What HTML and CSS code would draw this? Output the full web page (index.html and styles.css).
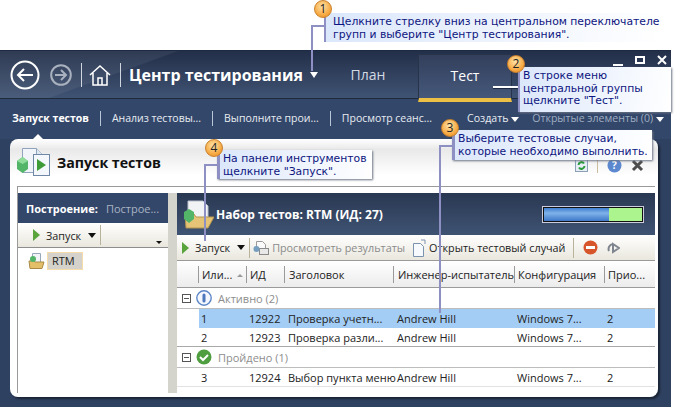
FILE: index.html
```html
<!DOCTYPE html>
<html lang="ru">
<head>
<meta charset="utf-8">
<title>Центр тестирования</title>
<link rel="stylesheet" href="styles.css">
</head>
<body>
<div class="stage">
  <main class="app">
    <header class="topbar">
      <svg class="glyph back" width="30" height="30" viewBox="0 0 30 30"><circle cx="15" cy="15" r="13.5" fill="none" stroke="#fff" stroke-width="2"/><path d="M23 15H8M14 9l-6 6 6 6" fill="none" stroke="#fff" stroke-width="2"/></svg>
      <svg class="glyph fwd" width="22" height="22" viewBox="0 0 22 22"><circle cx="11" cy="11" r="9.8" fill="none" stroke="#a9b1bf" stroke-width="2"/><path d="M5 11h11M11 6l5 5-5 5" fill="none" stroke="#a9b1bf" stroke-width="2"/></svg>
      <span class="vsep"></span>
      <svg class="glyph home" width="22" height="22" viewBox="0 0 22 22"><path d="M1 11 11 2l10 9M4 9v12h14V9M9 21v-7h4v7" fill="none" stroke="#fff" stroke-width="1.5"/></svg>
      <span class="vsep"></span>
      <h1 class="hub">Центр тестирования</h1>
      <span class="caret caret-lg"></span>
      <nav class="tabs">
        <span class="tab">План</span>
        <span class="tab tab-on">Тест</span>
      </nav>
      <div class="winbtns">
        <span class="win-min"></span><span class="win-max"></span>
        <svg width="10" height="10" viewBox="0 0 10 10"><path d="M1 1l8 8M9 1 1 9" stroke="#fff" stroke-width="2"/></svg>
      </div>
    </header>
    <nav class="menubar">
      <span class="mi mi-on">Запуск тестов</span>
      <span class="mi">Анализ тестовы...</span>
      <span class="mi">Выполните прои...</span>
      <span class="mi mi-last">Просмотр сеанс...</span>
      <span class="ma ma-create">Создать <span class="caret"></span></span>
      <span class="ma ma-open">Открытые элементы (0) <span class="caret"></span></span>
    </nav>
    <section class="panel">
      <div class="panel-head">
        <svg class="p-icon" width="34" height="30" viewBox="0 0 34 30"><path d="M5.500 .5h14l6 6v18h-20z" fill="#f1f5fa" stroke="#8fa3bd"/><path d="M19.500 .5v6h6" fill="#dfe7f1" stroke="#8fa3bd"/><rect x="16.500" y="6.500" width="16" height="21" fill="#f4f7fb" stroke="#6f88a8"/><path d="M20 11l9 6-9 6z" fill="#3f9a38"/><path d="M5.500 9l5.500 4v8l-5.500 4-5.500-4v-8z" fill="#52b568"/><path d="M5.500 9l5.500 4-5.500 3-5.500-3z" fill="#8fdc9b"/></svg>
        <h2 class="p-title">Запуск тестов</h2>
        <span class="p-tools">
          <svg width="13" height="13" viewBox="0 0 13 13"><rect x=".5" y=".5" width="12" height="12" fill="#e8eef6" stroke="#8ca0b8"/><path d="M3.500 6a3 3 0 0 1 5.500-1.500M9.500 7a3 3 0 0 1-5.500 1.500" fill="none" stroke="#2b9a3a" stroke-width="2"/></svg>
          <span class="tool-sep"></span>
          <svg width="15" height="15" viewBox="0 0 15 15"><circle cx="7.5" cy="7.5" r="7" fill="#5b88cf"/><text x="7.5" y="11" text-anchor="middle" class="help-q">?</text></svg>
          <svg width="13" height="13" viewBox="0 0 13 13"><path d="M2 2l9 9M11 2l-9 9" stroke="#4d4d4d" stroke-width="3"/></svg>
        </span>
      </div>
      <div class="frame">
        <aside class="left">
          <div class="left-head"><b>Построение:</b><span>Построе...</span></div>
          <div class="left-tools">
            <span class="play"></span><span class="tool-text">Запуск</span><span class="caret caret-dark"></span><span class="bar-sep"></span>
            <span class="caret caret-mini"></span>
          </div>
          <div class="tree">
            <svg width="17" height="16" viewBox="0 0 17 16"><path d="M4.500 .5h8v9h-8z" fill="#f2f4f8" stroke="#98a7ba"/><path d="M1 8h5l1 1h9l-2 6.500H2z" fill="#e4bf6a" stroke="#a98a44"/><circle cx="5" cy="6" r="3" fill="#52b568"/></svg>
            <span class="tree-label">RTM</span>
          </div>
        </aside>
        <div class="split"></div>
        <div class="right">
          <div class="right-head">
            <svg width="33" height="29" viewBox="0 0 33 29"><path d="M7 1h15l5 5v15H7z" fill="#f2f3f5" stroke="#b9c0ca"/><path d="M4 14h9l2 3h18l-6 11H5z" fill="#e6c477" stroke="#b39550"/><path d="M8 9l5 3v7l-5 4-5-4v-7z" fill="#52b568"/></svg>
            <h3 class="set-title">Набор тестов: RTM (ИД: 27)</h3>
            <div class="progress"><i class="p-blue"></i><i class="p-green"></i></div>
          </div>
          <div class="right-tools">
            <span class="play"></span><span class="tool-text">Запуск</span><span class="caret caret-dark"></span><span class="bar-sep sep-a"></span>
            <svg width="17" height="16" viewBox="0 0 17 16"><path d="M3.500 1.500h6l3 3v6h-9z" fill="#fafafa" stroke="#9a9a9a"/><rect x="6.500" y="8.500" width="9" height="6" fill="#e8e8e8" stroke="#8a8a8a"/><circle cx="3.500" cy="9" r="3" fill="#77a0c0"/></svg>
            <span class="tool-text muted">Просмотреть результаты</span>
            <svg class="doc" width="14" height="18" viewBox="0 0 14 18"><path d="M1.500 4.500h7l3 3v10h-10z" fill="#f7fafd" stroke="#7c93ad"/><path d="M9 1h4v4" fill="none" stroke="#7c93ad"/></svg>
            <span class="tool-text">Открыть тестовый случай</span><span class="bar-sep sep-b"></span>
            <svg width="15" height="15" viewBox="0 0 15 15"><circle cx="7.5" cy="7.5" r="7" fill="#d6552a"/><rect x="3" y="6" width="9" height="3" fill="#fff"/></svg>
            <svg class="cycle" width="13" height="14" viewBox="0 0 13 14"><path d="M6 3 12 7 6 11zM6 3A5 5 0 0 0 2 10" fill="none" stroke="#7f858e" stroke-width="2"/></svg>
          </div>
          <div class="grid">
            <div class="row thead"><span></span><span class="th">Или... <em class="sort"></em></span><span class="th">ИД</span><span class="th">Заголовок</span><span class="th">Инженер-испытатель</span><span class="th">Конфигурация</span><span class="th">Прио...</span></div>
            <div class="group">
              <span class="exp"></span>
              <svg width="16" height="16" viewBox="0 0 16 16"><circle cx="8" cy="8" r="7.2" fill="#f4f7fd" stroke="#5d86c6" stroke-width="1.4"/><rect x="6.5" y="3.5" width="3" height="9" rx="1.5" fill="#4d78bd"/></svg>
              <span class="g-text">Активно (2)</span>
            </div>
            <div class="row sel"><span class="blank"></span><span>1</span><span>12922</span><span>Проверка учетн...</span><span>Andrew Hill</span><span>Windows 7...</span><span>2</span></div>
            <div class="row line"><span></span><span>2</span><span>12923</span><span>Проверка разли...</span><span>Andrew Hill</span><span>Windows 7...</span><span>2</span></div>
            <div class="group">
              <span class="exp"></span>
              <svg width="16" height="16" viewBox="0 0 16 16"><circle cx="8" cy="8" r="7.5" fill="#4f9e3f"/><path d="M4 8l3 3 5-5" fill="none" stroke="#fff" stroke-width="2"/></svg>
              <span class="g-text">Пройдено (1)</span>
            </div>
            <div class="row line"><span></span><span>3</span><span>12924</span><span class="nowrap">Выбор пункта меню</span><span>Andrew Hill</span><span>Windows 7...</span><span>2</span></div>
          </div>
        </div>
      </div>
    </section>
  </main>

  <div class="lead lead1a"></div><div class="lead lead1b"></div>
  <div class="lead lead2"></div>
  <div class="lead lead3a"></div><div class="lead lead3b"></div>
  <div class="lead lead4a"></div><div class="lead lead4b"></div>

  <div class="note note1">Щелкните стрелку вниз на центральном переключателе<br>групп и выберите "Центр тестирования".</div>
  <div class="note note2">В строке меню<br>центральной группы<br>щелкните "Тест".</div>
  <div class="note note3">Выберите тестовые случаи,<br>которые необходимо выполнить.</div>
  <div class="note note4">На панели инструментов<br>щелкните "Запуск".</div>
  <span class="badge b1">1</span><span class="badge b2">2</span><span class="badge b3">3</span><span class="badge b4">4</span>
</div>
</body>
</html>
```

FILE: styles.css
```css
* { box-sizing: border-box; }
html, body { margin: 0; background: #fff; }
body { font-family: "Open Sans", "Noto Sans", sans-serif; font-size: 11px; color: #222; overflow: hidden; }
h1, h2, h3 { margin: 0; }
.stage { position: relative; width: 679px; height: 407px; padding-top: 50px; overflow: hidden; }

.app { width: 671px; height: 357px; background: #2f4160; display: flex; flex-direction: column; }

.topbar { height: 49px; flex: none; display: flex; align-items: center; padding-left: 10px; color: #fff; z-index: 1;
  background: linear-gradient(160deg, rgba(255,255,255,.06) 0 22%, transparent 22.5%), linear-gradient(#232f49, #3f5373); border-top: 1px solid #1c2a42; border-bottom: 1px solid #1f2a3d; position: relative; }
.glyph { flex: none; }
.fwd { margin-left: 10px; }
.vsep { width: 1px; height: 24px; background: #cfd6e0; margin: 0 8px 0 9px; flex: none; }
.home { margin-left: -1px; }
.hub { font-size: 16px; font-weight: 700; white-space: nowrap; width: 181px; }
.caret { display: inline-block; width: 0; height: 0; border-left: 4px solid transparent; border-right: 4px solid transparent; border-top: 5px solid #fff; vertical-align: middle; }
.caret-lg { margin-left: 0; border-left-width: 4.5px; border-right-width: 4.5px; border-top-width: 6px; flex: none; }
.tabs { display: flex; align-self: stretch; margin-left: 8px; }
.tab { display: flex; align-items: center; justify-content: center; font-size: 14px; color: #d4dae4; width: 84px; }
.tab-on { width: 94px; margin-left: 8px; margin-top: 3px; margin-bottom: -4px; padding-bottom: 2px; color: #fff; background: linear-gradient(#333f5c, #45587a); border: 1px solid #273349; border-bottom: 4px solid #ecc044; }
.winbtns { position: absolute; right: 4px; top: 4px; display: flex; align-items: flex-start; gap: 12px; }
.win-min { width: 10px; height: 2px; background: #fff; margin-top: 9px; }
.win-max { width: 10px; height: 8px; border: 2px solid #fff; margin-top: 1px; }

.menubar { height: 40px; flex: none; display: flex; align-items: flex-start; padding: 12px 0 0 12px; color: #e8ecf2; background: #33476a; position: relative; }
.mi { padding-right: 11px; margin-right: 11px; border-right: 1px solid #b8c6d8; font-size: 10.5px; line-height: 15px; white-space: nowrap; }
.mi-on { font-weight: 700; color: #fff; }
.mi-on::after { content: ""; position: absolute; left: 33px; bottom: 0; border-left: 5px solid transparent; border-right: 5px solid transparent; border-bottom: 5px solid #fff; }
.mi-last { border-right: 0; margin-right: 0; padding-right: 35px; }
.ma { font-size: 10.6px; line-height: 15px; white-space: nowrap; }
.ma-create { margin-right: 13px; }
.ma-open { color: #9fadc0; }

.panel { flex: none; width: 648px; height: 258px; margin-left: 10px; border-radius: 8px; box-shadow: 2px 2px 2px #1a2536; padding: 0 3px 4px 7px; display: flex; flex-direction: column;
  background: linear-gradient(#fff 0, #e9e9e9 4%, #fff 14%, #fff 100%); }
.panel-head { height: 47px; flex: none; display: flex; align-items: center; }
.p-title { font-size: 14.2px; font-weight: 700; color: #111; margin-left: 6px; white-space: nowrap; }
.p-tools { margin-left: auto; display: flex; align-items: center; gap: 9px; padding: 0 11px 0 0; margin-top: 6px; }
.tool-sep { width: 1px; height: 14px; background: #c9bd9c; }
.help-q { font: 700 10px "Open Sans", sans-serif; fill: #fff; }

.frame { flex: 1; display: flex; border-top: 1px solid #9a9a9a; border-left: 1px solid #9a9a9a; padding-top: 6px; min-height: 0; }
.left { width: 150px; flex: none; }
.left-head { height: 30px; background: #33476a; display: flex; align-items: center; gap: 8px; padding-left: 8px; font-size: 11px; color: #fff; white-space: nowrap; }
.left-head span { color: #a9b4c4; }
.left-tools, .right-tools { display: flex; align-items: center; background: linear-gradient(#fff, #e9e7dd); position: relative; }
.left-tools { height: 25px; padding-left: 15px; border-bottom: 1px solid #8d8d8d; }
.play { width: 0; height: 0; border-left: 7px solid #5aa43c; border-top: 6px solid transparent; border-bottom: 6px solid transparent; flex: none; }
.tool-text { margin-left: 6px; font-size: 10.8px; color: #222; white-space: nowrap; }
.caret-dark { border-top-color: #111; margin-left: 7px; flex: none; }
.bar-sep { width: 1px; height: 20px; background: #b9b39c; margin-left: 4px; flex: none; }
.caret-mini { position: absolute; right: 6px; bottom: 3px; border-left-width: 3px; border-right-width: 3px; border-top: 3px solid #111; }
.tree { display: flex; align-items: center; gap: 2px; padding: 4px 0 0 10px; }
.tree-label { width: 36px; height: 18px; line-height: 16px; padding-left: 4px; background: #d4d2ca; border: 1px solid #f6dcab; color: #222; }
.split { width: 9px; flex: none; background: #d4d4cc; }
.right { flex: 1; min-width: 0; }
.right-head { height: 42px; background: linear-gradient(#2a3852, #3f5373); display: flex; align-items: center; padding-left: 4px; color: #fff; }
.set-title { font-size: 12px; font-weight: 700; margin-left: 2px; white-space: nowrap; }
.progress { margin-left: auto; margin-right: 12px; width: 100px; height: 15px; border: 1px solid #111; outline: 1px solid #ccd; display: flex; }
.p-blue { width: 66%; background: linear-gradient(#3f7fd0, #7fb2ea 40%, #3d78c8); }
.p-green { flex: 1; background: #abf48e; }
.right-tools { height: 26px; padding-left: 5px; border-bottom: 1px solid #9a9a9a; }
.right-tools svg { margin-left: 3px; flex: none; }
.muted { color: #8b8b8b; }
.tool-text.muted { margin-left: 2px; }
.right-tools .doc { margin-left: 7px; }
.right-tools .doc + .tool-text { margin-left: 3px; }
.sep-b { margin: 0 6px 0 8px; }
.right-tools .cycle { margin-left: 9px; }

.row { display: grid; grid-template-columns: 21px 48px 38px 109px 121px 90px 50px; height: 19px; align-items: center; font-size: 11px; white-space: nowrap; }
.row > span { padding-left: 3px; }
.row > span:first-child { padding-left: 0; }
.row > span:nth-child(4), .row > span:nth-child(5) { padding-left: 4px; }
.thead { height: 27px; background: linear-gradient(#fff, #ececec); border-bottom: 1px solid #9a9a9a; }
.thead > .th { height: 17px; line-height: 17px; border-left: 1px solid #9a9a9a; }
.sort { display: inline-block; margin-left: 2px; border-left: 3px solid transparent; border-right: 3px solid transparent; border-bottom: 3px solid #999; vertical-align: middle; }
.group { height: 21px; display: flex; align-items: center; padding-left: 5px; border-bottom: 1px solid #bdbdbd; }
.exp { width: 9px; height: 9px; border: 1px solid #555; margin-right: 5px; background: linear-gradient(#555,#555) center/5px 1px no-repeat; flex: none; }
.g-text { color: #8d8d8d; margin-left: 6px; }
.sel { background: linear-gradient(90deg, transparent 22px, #a3cdf5 22px); }
.line { border-bottom: 1px solid #e2e2e2; }
.row.line:nth-child(4) { border-bottom-color: #a9a9a9; }
.nowrap { white-space: nowrap; }

.note { position: absolute; font-family: "DejaVu Sans", sans-serif; font-size: 10.8px; line-height: 13px; color: #0d1580; white-space: nowrap; background: linear-gradient(100deg, #dbe7fb, #fff); }
.note1 { left: 324px; top: 13px; width: 336px; height: 29px; padding: 2px 0 0 7px; border-left: 2px solid #8e90c4; }
.note2, .note3, .note4 { box-shadow: 1px 1px 2px #6c7484; border-left: 3px solid #8e90c4; }
.note2 { left: 518px; top: 67px; width: 153px; height: 45px; padding: 3px 0 0 3px; border-left-width: 2px; line-height: 12.5px; }
.note3 { left: 452px; top: 130px; width: 200px; height: 30px; padding: 2px 0 0 3px; }
.note4 { left: 217px; top: 150px; width: 155px; height: 29px; padding: 2px 0 0 3px; }
.lead { position: absolute; background: #8e90c4; z-index: 2; }
.note, .badge { z-index: 3; }
.lead1a { left: 312px; top: 25px; width: 13px; height: 2px; }
.lead1b { left: 311px; top: 25px; width: 2px; height: 46px; }
.lead2 { left: 493px; top: 86px; width: 26px; height: 3px; background: #fff; border-top: 1px solid #fff; border-bottom: 1px solid #1d2940; }
.lead3a { left: 439px; top: 145px; width: 14px; height: 2px; }
.lead3b { left: 439px; top: 145px; width: 2px; height: 168px; }
.lead4a { left: 204px; top: 164px; width: 14px; height: 2px; }
.lead4b { left: 204px; top: 164px; width: 2px; height: 77px; }
.badge { position: absolute; width: 18px; height: 18px; border-radius: 50%; background: radial-gradient(circle at 45% 35%, #fde3a8, #f6a63e 65%, #e58a24); border: 1px solid #c9812c; font: 12px/16px "Open Sans", sans-serif; text-align: center; color: #222; }
.b1 { left: 314px; top: 0; }
.b2 { left: 507px; top: 55px; }
.b3 { left: 441px; top: 119px; }
.b4 { left: 205px; top: 139px; }
```
